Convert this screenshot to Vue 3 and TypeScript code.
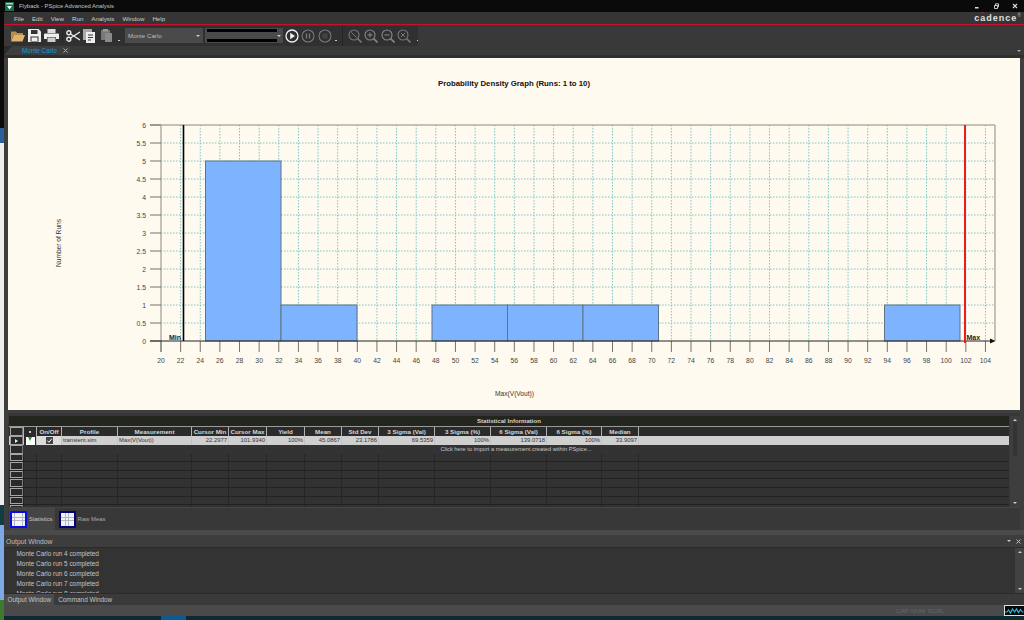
<script setup lang="ts">
const menus: string[] = ['File', 'Edit', 'View', 'Run', 'Analysis', 'Window', 'Help']

const xPos = (v: number): number => 161 + (v - 20) * 9.815
const yPos = (v: number): number => 341 - v * 36

const xTicks: number[] = Array.from({ length: 43 }, (_, i) => 20 + i * 2)
const yTicks: number[] = Array.from({ length: 13 }, (_, i) => i * 0.5)

interface Bar { x: number; w: number; h: number }
const bars: Bar[] = [
  { x: 205.5, w: 75.5, h: 5 },
  { x: 281, w: 76, h: 1 },
  { x: 432, w: 75.5, h: 1 },
  { x: 507.5, w: 75.5, h: 1 },
  { x: 583, w: 75.5, h: 1 },
  { x: 884.5, w: 75.5, h: 1 }
]

const headers: string[] = ['On/Off', 'Profile', 'Measurement', 'Cursor Min', 'Cursor Max', 'Yield', 'Mean', 'Std Dev', '3 Sigma (Val)', '3 Sigma (%)', '6 Sigma (Val)', '6 Sigma (%)', 'Median']

interface Cell { t: string; left?: boolean }
const values: Cell[] = [
  { t: 'transient.sim', left: true },
  { t: 'Max(V(Vout))', left: true },
  { t: '22.2977' },
  { t: '101.9340' },
  { t: '100%' },
  { t: '45.0867' },
  { t: '23.1786' },
  { t: '69.5359' },
  { t: '100%' },
  { t: '139.0718' },
  { t: '100%' },
  { t: '33.9097' }
]

const emptyRows: number[] = [1, 2, 3, 4, 5, 6, 7]
const emptyCols: number = 15
const outputLines: number[] = [4, 5, 6, 7, 8]
const gridCells: number[] = Array.from({ length: 25 }, (_, i) => i)
</script>

<template>
  <div class="page">
    <div class="desk"></div>
    <div class="window">
      <header class="titlebar">
        <svg class="app-icon" viewBox="0 0 9 9" width="9" height="9">
          <rect width="9" height="9" fill="#1d6b4a" />
          <rect x="1" y="1" width="7" height="1.5" fill="#9fd8b8" />
          <path d="M2 4h5L4.5 7.5z" fill="#fff" />
        </svg>
        <span class="title-text">Flyback - PSpice Advanced Analysis</span>
        <div class="win-controls">
          <svg viewBox="0 0 6 6" width="6" height="6"><rect x="1" y="4" width="3.5" height="1.5" fill="#ddd" /></svg>
          <svg viewBox="0 0 6 6" width="6" height="6"><path d="M1.5 2.5h3v3h-3zM2.5 2.5V.8h3v3h-1" fill="none" stroke="#ddd" stroke-width="0.9" /></svg>
          <svg viewBox="0 0 6 6" width="6" height="6"><path d="M1 1l4 4M5 1L1 5" stroke="#ddd" stroke-width="1.1" /></svg>
        </div>
      </header>

      <nav class="menubar">
        <div class="menus">
          <span v-for="m in menus" :key="m">{{ m }}</span>
        </div>
        <div class="logo">c<span class="logo-a">a<i></i></span>dence<sup>®</sup></div>
      </nav>

      <div class="toolbar">
        <div class="tool-group first">
          <svg class="ic" viewBox="0 0 14 12" width="14" height="12"><path d="M0 1.5h5l1 1.5h6v2H3L0 11z" fill="#b98d4e" /><path d="M3 5h11l-2.5 6.5H0z" fill="#e2b36c" /></svg>
          <svg class="ic" viewBox="0 0 13 13" width="13" height="13"><path d="M0 0h10.5L13 2.5V13H0z" fill="#eee" /><rect x="3" y="1" width="6.5" height="4" fill="#333" /><rect x="2.5" y="7.5" width="8" height="5" fill="#333" /><rect x="3.5" y="8.5" width="6" height="3.5" fill="#eee" /></svg>
          <svg class="ic" viewBox="0 0 15 13" width="15" height="13"><rect x="3.5" y="0" width="8" height="4" fill="#ddd" /><path d="M1 4.5h13a1 1 0 0 1 1 1V10h-3V8H3v2H0V5.5a1 1 0 0 1 1-1z" fill="#eee" /><rect x="3.5" y="8.5" width="8" height="4.5" fill="#ccc" /></svg>
          <b class="sep"></b>
          <svg class="ic" viewBox="0 0 14 12" width="14" height="12"><circle cx="2.8" cy="2.8" r="2" fill="none" stroke="#eee" stroke-width="1.4" /><circle cx="2.8" cy="9.2" r="2" fill="none" stroke="#eee" stroke-width="1.4" /><path d="M4.5 4L14 10M4.5 8L14 2" stroke="#eee" stroke-width="1.3" /></svg>
          <svg class="ic" viewBox="0 0 12 14" width="12" height="14"><rect x="0" y="0" width="9" height="11" fill="#aaa" /><rect x="3" y="3" width="9" height="11" fill="#eee" /><path d="M5 6h5M5 8.5h5M5 11h3" stroke="#333" stroke-width="1" /></svg>
          <svg class="ic dim" viewBox="0 0 11 13" width="11" height="13"><rect x="0" y="1" width="9" height="10" fill="#777" /><rect x="2" y="0" width="5" height="2.5" fill="#999" /><rect x="4" y="4" width="7" height="9" fill="#8a8a8a" /></svg>
          <i class="more"></i>
        </div>
        <div class="tool-group combos">
          <div class="combo">
            <span>Monte Carlo</span>
            <i class="down"></i>
          </div>
          <div class="combo combo-dark">
            <div class="combo-strips"><b></b><b></b></div>
            <i class="down"></i>
          </div>
          <svg class="ic play" viewBox="0 0 14 14" width="14" height="14"><circle cx="7" cy="7" r="6" fill="none" stroke="#f2f2f2" stroke-width="1.3" /><path d="M5.2 3.8l4.8 3.2-4.8 3.2z" fill="#f2f2f2" /></svg>
          <svg class="ic pause" viewBox="0 0 14 14" width="14" height="14"><circle cx="7" cy="7" r="6" fill="none" stroke="#777" stroke-width="1.1" /><path d="M5.5 4.5v5M8.5 4.5v5" stroke="#777" stroke-width="1.3" /></svg>
          <svg class="ic stop" viewBox="0 0 14 14" width="14" height="14"><circle cx="7" cy="7" r="6" fill="none" stroke="#777" stroke-width="1.1" /><rect x="4.5" y="4.5" width="5" height="5" fill="#444" /></svg>
          <i class="more"></i>
        </div>
        <div class="tool-group zooms">
          <svg class="ic" viewBox="0 0 14 14" width="14" height="14"><circle cx="6" cy="6" r="5" fill="none" stroke="#777" stroke-width="1.1" /><path d="M9.5 9.5L13.5 13.5" stroke="#777" stroke-width="1.6" /><path d="M3.5 3.5l5 5" stroke="#777" stroke-width="1" /></svg>
          <svg class="ic" viewBox="0 0 14 14" width="14" height="14"><circle cx="6" cy="6" r="5" fill="none" stroke="#888" stroke-width="1.1" /><path d="M9.5 9.5L13.5 13.5" stroke="#888" stroke-width="1.6" /><path d="M3.5 6h5M6 3.5v5" stroke="#888" stroke-width="1" /></svg>
          <svg class="ic" viewBox="0 0 14 14" width="14" height="14"><circle cx="6" cy="6" r="5" fill="none" stroke="#888" stroke-width="1.1" /><path d="M9.5 9.5L13.5 13.5" stroke="#888" stroke-width="1.6" /><path d="M3.5 6h5" stroke="#888" stroke-width="1" /></svg>
          <svg class="ic" viewBox="0 0 14 14" width="14" height="14"><circle cx="6" cy="6" r="5" fill="none" stroke="#777" stroke-width="1.1" /><path d="M9.5 9.5L13.5 13.5" stroke="#777" stroke-width="1.6" /><path d="M4 4l4 4M8 4l-4 4" stroke="#777" stroke-width="1" /></svg>
          <i class="more"></i>
        </div>
      </div>

      <div class="tabbar">
        <div class="tab-wrap">
          <div class="doc-tab">
            <span>Monte Carlo</span>
            <svg viewBox="0 0 5 5" width="5" height="5"><path d="M.5.5l4 4M4.5.5l-4 4" stroke="#aaa" stroke-width="1" /></svg>
          </div>
        </div>
        <i class="tab-arrow"></i>
      </div>

      <main class="body">
        <section class="chart">
          <svg viewBox="8 58 1012 352" width="1012" height="352">
            <text x="514" y="86" class="chart-title" text-anchor="middle">Probability Density Graph (Runs: 1 to 10)</text>
            <text class="axis-name" transform="translate(61 243) rotate(-90)" text-anchor="middle">Number of Runs</text>
            <text x="514.5" y="396" class="axis-name" text-anchor="middle">Max(V(Vout))</text>

            <line v-for="t in xTicks.slice(1)" :key="'gx' + t" :x1="xPos(t)" :x2="xPos(t)" y1="125" y2="341" class="grid" />
            <line v-for="t in yTicks.slice(1, 12)" :key="'gy' + t" x1="161" x2="995" :y1="yPos(t)" :y2="yPos(t)" class="grid" />

            <line x1="161" x2="161" y1="125" y2="352" class="frame" />
            <line x1="150" x2="995" y1="125" y2="125" class="frame" />
            <line x1="995" x2="995" y1="125" y2="341" class="frame" />

            <line v-for="t in yTicks" :key="'ty' + t" x1="150" x2="161" :y1="yPos(t)" :y2="yPos(t)" class="tick" />
            <line v-for="t in xTicks" :key="'tx' + t" :x1="xPos(t)" :x2="xPos(t)" y1="341" y2="352" class="tick" />
            <text v-for="t in yTicks" :key="'ly' + t" x="146" :y="yPos(t) + 2.5" class="num" text-anchor="end">{{ t }}</text>
            <text v-for="t in xTicks" :key="'lx' + t" :x="xPos(t)" y="363" class="num" text-anchor="middle">{{ t }}</text>

            <rect v-for="b in bars" :key="b.x" :x="b.x" :y="yPos(b.h)" :width="b.w" :height="b.h * 36" class="bar" />

            <line x1="150" x2="992" y1="341" y2="341" class="axis" />
            <path d="M990 338.5l5.5 2.5-5.5 2.5z" fill="#111" />

            <line x1="183.5" x2="183.5" y1="125" y2="341" class="cur-min" />
            <line x1="965" x2="965" y1="125" y2="343" class="cur-max" />
            <text x="169" y="339.5" class="cur-label">Min</text>
            <text x="966.5" y="339.5" class="cur-label">Max</text>
          </svg>
        </section>

        <section class="stats">
          <div class="stats-main">
            <div class="table">
              <div class="table-title">Statistical Information</div>
              <div class="trow head">
                <span class="rh"></span>
                <span class="hc star"><i></i></span>
                <span v-for="h in headers" :key="h" class="hc">{{ h }}</span>
                <span class="hc"></span>
              </div>
              <div class="trow selected">
                <span class="rh"><i class="arrow"></i></span>
                <span class="cell flag"><i class="flag-box"><b></b></i></span>
                <span class="cell check"><svg viewBox="0 0 7 7" width="7" height="7"><rect width="7" height="7" fill="#444" /><path d="M1.3 3.6l1.6 1.7 2.9-3.5" fill="none" stroke="#fff" stroke-width="1" /></svg></span>
                <span v-for="(v, i) in values" :key="i" class="cell" :class="{ left: v.left }">{{ v.t }}</span>
                <span class="cell"></span>
              </div>
              <div class="trow import">
                <span class="rh"></span>
                <span class="import-text">Click here to import a measurement created within PSpice...</span>
              </div>
              <div v-for="r in emptyRows" :key="r" class="trow empty">
                <span class="rh"></span>
                <span v-for="c in emptyCols" :key="c" class="cell"></span>
              </div>
            </div>
            <div class="vscroll">
              <i class="up"></i>
              <b></b>
              <i class="dn"></i>
            </div>
          </div>
          <div class="sheet-tabs">
            <div class="sheet active">
              <span class="sheet-icon blue"><b v-for="n in gridCells" :key="n"></b></span>
              <span>Statistics</span>
            </div>
            <div class="sheet">
              <span class="sheet-icon navy"><b v-for="n in gridCells" :key="n"></b></span>
              <span>Raw Meas</span>
            </div>
          </div>
        </section>
      </main>

      <div class="divider"></div>

      <section class="output">
        <div class="out-head">
          <span>Output Window</span>
          <div class="out-btns">
            <i class="dn"></i>
            <svg viewBox="0 0 5 5" width="5" height="5"><path d="M.5.5l4 4M4.5.5l-4 4" stroke="#bbb" stroke-width="1" /></svg>
          </div>
        </div>
        <div class="out-body">
          <div class="out-lines">
            <div v-for="n in outputLines" :key="n">Monte Carlo run {{ n }} completed</div>
          </div>
          <div class="vscroll out-scroll">
            <i class="up"></i>
            <b></b>
            <i class="dn"></i>
          </div>
        </div>
        <div class="out-tabs">
          <span class="out-tab on">Output Window</span>
          <span class="out-tab">Command Window</span>
        </div>
      </section>

      <footer class="status">
        <span class="keys">CAP NUM SCRL</span>
        <svg class="pulse" viewBox="0 0 19 9" width="19" height="9"><rect width="19" height="9" fill="#0a0a0a" /><path d="M0 6h2l1.5-2 2 3 2-4 2 3 2-3 2 3.5 2-3 2 2.5h1" fill="none" stroke="#2fb6d8" stroke-width="1.2" /></svg>
      </footer>

      <div class="taskbar">
        <span class="task-active"></span>
      </div>
    </div>
  </div>
</template>

<style>
html, body { margin: 0; background: #0e2a30; }
</style>

<style scoped>
* { box-sizing: border-box; }
.page {
  width: 1024px;
  height: 620px;
  display: flex;
  overflow: hidden;
  font-family: "Liberation Sans", Arial, sans-serif;
  font-size: 6.5px;
  color: #ccc;
}
.desk {
  width: 4px;
  flex: none;
  background: linear-gradient(#0a0a0a 0 128px, #2c5f9e 128px 143px, #ededed 143px 505px, #123c44 505px 525px, #7da9e6 525px 600px, #3e7a2e 600px);
}
.window {
  flex: 1;
  display: flex;
  flex-direction: column;
  min-width: 0;
  background: #3e3e3e;
}
.titlebar {
  height: 12px;
  flex: none;
  background: #0a0a0a;
  display: flex;
  align-items: center;
  padding: 0 6px 0 1px;
}
.app-icon { margin-right: 5px; }
.title-text { font-size: 5.9px; color: #c4c4c4; }
.win-controls { margin-left: auto; display: flex; gap: 13px; }
.menubar {
  height: 13px;
  flex: none;
  background: #353535;
  border-bottom: 1.5px solid #c8102e;
  display: flex;
  align-items: center;
  padding: 0 0 0 10px;
}
.menus { display: flex; gap: 8px; font-size: 6.2px; color: #cfcfcf; }
.logo {
  margin-left: auto;
  margin-right: 3px;
  font-family: "Liberation Sans", sans-serif;
  font-weight: 700;
  font-size: 9px;
  letter-spacing: 1px;
  color: #e2e2e2;
  line-height: 1;
}
.logo sup { font-size: 5px; color: #999; letter-spacing: 0; vertical-align: 4px; line-height: 0; }
.logo-a { position: relative; }
.logo-a i { position: absolute; left: 1px; top: -1px; width: 3px; height: 1px; background: #c8102e; }

.toolbar {
  height: 21px;
  flex: none;
  background: #393939;
  display: flex;
  align-items: center;
  padding-left: 7px;
}
.tool-group {
  height: 20px;
  background: #303030;
  display: flex;
  align-items: center;
  flex: none;
}
.ic { flex: none; }
.first { width: 114px; gap: 3px; }
.sep { width: 1px; height: 15px; background: #242424; }
.more { width: 1.5px; height: 1.5px; background: #ccc; margin: 10px 0 0 3px; flex: none; }
.dim { margin-left: 3px; }
.combos { width: 217px; }
.combo {
  width: 78px;
  height: 15px;
  background: #4a4a4a;
  display: flex;
  align-items: center;
  padding: 0 3px;
  margin-right: 2px;
  color: #bdbdbd;
  font-size: 6.2px;
  flex: none;
}
.combo-dark { padding: 0 2px; }
.combo-strips { flex: 1; height: 13px; display: flex; flex-direction: column; justify-content: space-between; }
.combo-strips b { height: 3px; background: #000; }
.down, .dn {
  width: 0; height: 0; display: block; flex: none;
  border-left: 2.5px solid transparent;
  border-right: 2.5px solid transparent;
  border-top: 2.5px solid #ccc;
}
.combo .down { margin-left: auto; }
.up {
  width: 0; height: 0; display: block; flex: none;
  border-left: 2.5px solid transparent;
  border-right: 2.5px solid transparent;
  border-bottom: 2.5px solid #ccc;
}
.pause { margin-left: 2px; }
.stop { margin-left: 3px; }
.zooms { gap: 2.4px; padding-left: 5px; width: 76px; border-left: 1px solid #242424; }

.tabbar {
  height: 9px;
  flex: none;
  display: flex;
  align-items: center;
  padding-right: 3px;
  background-color: #393939;
}
.tab-wrap { width: 66px; height: 9px; background: #2a2a2a; }
.doc-tab {
  height: 9px;
  background: #3e3e3e;
  clip-path: polygon(8px 0, 100% 0, 100% 100%, 0 100%);
  display: flex;
  align-items: center;
  padding-left: 18px;
  gap: 6px;
  color: #0a9be0;
  font-size: 6.4px;
}
.tab-arrow {
  margin-left: auto;
  width: 0; height: 0;
  border-left: 2.5px solid transparent;
  border-right: 2.5px solid transparent;
  border-top: 2.5px solid #aaa;
}

.body {
  flex: none;
  padding: 0 4px;
  border-top: 3px solid #2f2f2f;
  display: flex;
  flex-direction: column;
}
.chart {
  height: 352px;
  background: #fffaf0;
}
.chart svg { display: block; }
.chart-title { font: 700 7.8px "Liberation Sans", Arial, sans-serif; fill: #111; }
.axis-name { font: 6.6px "Liberation Sans", Arial, sans-serif; fill: #333; }
.num { font: 6.8px "Liberation Sans", Arial, sans-serif; fill: #444; }
.cur-label { font: 700 7px "Liberation Sans", Arial, sans-serif; fill: #222; }
.grid { stroke: #7cc4c4; stroke-width: 1; stroke-dasharray: 1.5 1.5; }
.frame { stroke: #b3ae9f; stroke-width: 1.5; }
.tick { stroke: #77736a; stroke-width: 1; }
.axis { stroke: #222; stroke-width: 1; }
.bar { fill: #7eb3ff; stroke: #5f7286; stroke-width: 1; }
.cur-min { stroke: #000; stroke-width: 1.6; }
.cur-max { stroke: #f01c1c; stroke-width: 2; }

.stats {
  margin-top: 3px;
  height: 117px;
  background: #383838;
}
.stats-main {
  display: flex;
  height: 94px;
  padding: 3px 0 0 1px;
}
.table {
  flex: 1;
  min-width: 0;
  height: 91px;
  overflow: hidden;
  background: #2f2f2f;
}
.table-title {
  height: 10px;
  background: #23251f;
  color: #d4d4d4;
  font-weight: 700;
  text-align: center;
  line-height: 10px;
  font-size: 6.1px;
}
.trow {
  display: grid;
  grid-template-columns: 14px 13px 25px 56px 74px 37px 38px 38px 37px 37px 56px 56px 56px 55px 37px 1fr;
  height: 8.6px;
  line-height: 8.6px;
}
.head {
  height: 10px;
  line-height: 9px;
  border-top: 1px solid #9a9a9a;
  background: #2b2b2b;
}
.rh {
  border: 1px solid #a6a6a6;
  border-right-color: #777;
  background: #2a2a2a;
  margin-left: 1px;
  display: flex;
  align-items: center;
  justify-content: center;
}
.hc {
  text-align: center;
  font-weight: 700;
  color: #d6d6d6;
  border-left: 1px solid #b0b0b0;
  font-size: 6.2px;
  white-space: nowrap;
  overflow: hidden;
}
.star { display: flex; align-items: center; justify-content: center; }
.star i { width: 2px; height: 2px; border-radius: 50%; background: #fff; }
.cell {
  border-left: 1px solid #262626;
  text-align: right;
  padding: 0 1px;
  white-space: nowrap;
  overflow: hidden;
  font-size: 5.9px;
}
.selected { background: #cfcfcf; color: #333; height: 9px; line-height: 9px; }
.selected .cell { border-left-color: #c4c4c4; }
.left { text-align: left; }
.arrow {
  width: 0; height: 0;
  border-top: 2.5px solid transparent;
  border-bottom: 2.5px solid transparent;
  border-left: 3px solid #eee;
}
.flag { padding: 0; display: flex; align-items: center; justify-content: center; background: #2b2b2b; }
.flag-box { width: 9px; height: 8px; background: #fff; display: flex; justify-content: center; }
.flag-box b {
  width: 0; height: 0;
  border-left: 2.5px solid transparent;
  border-right: 2.5px solid transparent;
  border-top: 4px solid #1fa01f;
}
.check { display: flex; align-items: center; justify-content: center; padding: 0; background: #dcdcdc; }
.import { grid-template-columns: 14px 1fr; background: #333; }
.import-text { text-align: center; color: #c8c8c8; font-size: 5.7px; }
.empty { background: #323232; border-bottom: 1px solid #222; }
.vscroll {
  width: 10px;
  margin-left: 1px;
  flex: none;
  background: #3e3e3e;
  display: flex;
  flex-direction: column;
  align-items: center;
  padding: 3px 0;
}
.vscroll b { width: 4px; height: 33px; background: #333; margin-top: 2px; }
.vscroll .dn { margin-top: auto; }
.sheet-tabs {
  display: flex;
  height: 23px;
  padding: 0 0 0 1px;
  gap: 3px;
  border-top: 1px solid #444;
  color: #aaa;
  font-size: 5.9px;
}
.sheet {
  display: flex;
  align-items: center;
  gap: 2px;
  padding-right: 2px;
}
.active { background: #454545; color: #c8c8c8; }
.sheet-icon {
  width: 17px;
  height: 17px;
  border: 2px solid;
  margin-left: 1px;
  display: grid;
  grid-template-columns: repeat(5, 1fr);
  grid-template-rows: repeat(5, 1fr);
  gap: 0.5px;
  background: #b4b8c4;
}
.sheet-icon b { background: #f4f4f4; }
.blue { border-color: #0a0ae6; }
.navy { border-color: #04047e; }
.divider { height: 5px; flex: none; background: #4a4a4a; }

.output { flex: 1; min-height: 0; display: flex; flex-direction: column; }
.out-head {
  height: 13px;
  flex: none;
  background: #3d3d3d;
  border-bottom: 1px solid #2b2b2b;
  display: flex;
  align-items: center;
  padding: 0 3px 0 2px;
  font-size: 6.8px;
  color: #bdbdbd;
}
.out-btns { margin-left: auto; display: flex; align-items: center; gap: 5px; }
.out-body { height: 45px; flex: none; display: flex; background: #333; overflow: hidden; }
.out-lines {
  flex: 1;
  padding: 1px 0 0 12.5px;
  font-size: 6.4px;
  line-height: 10px;
  color: #c4c4c4;
  overflow: hidden;
}
.out-scroll { width: 9px; background: #424242; margin-left: 0; }
.out-scroll b { display: none; }
.out-tabs {
  height: 12px;
  flex: none;
  display: flex;
  background: #3a3a3a;
  border-top: 1px solid #2b2b2b;
  font-size: 6.4px;
}
.out-tab { padding: 0 4px 0 3px; line-height: 11px; margin-left: 1px; color: #c4c4c4; }
.on { background: #4b4b4b; margin-left: 0; padding: 0 3px 0 3.5px; }
.status {
  height: 11px;
  flex: none;
  background: #4a4a4a;
  display: flex;
  align-items: center;
  padding-left: 892px;
}
.keys { color: #666; font-size: 6.1px; word-spacing: 1px; width: 109px; }
.pulse { outline: 1px solid #ddd; }
.taskbar { height: 4px; flex: none; background: #0e2a30; padding-left: 157px; display: flex; }
.task-active { width: 25px; background: #0b5a90; }
</style>
